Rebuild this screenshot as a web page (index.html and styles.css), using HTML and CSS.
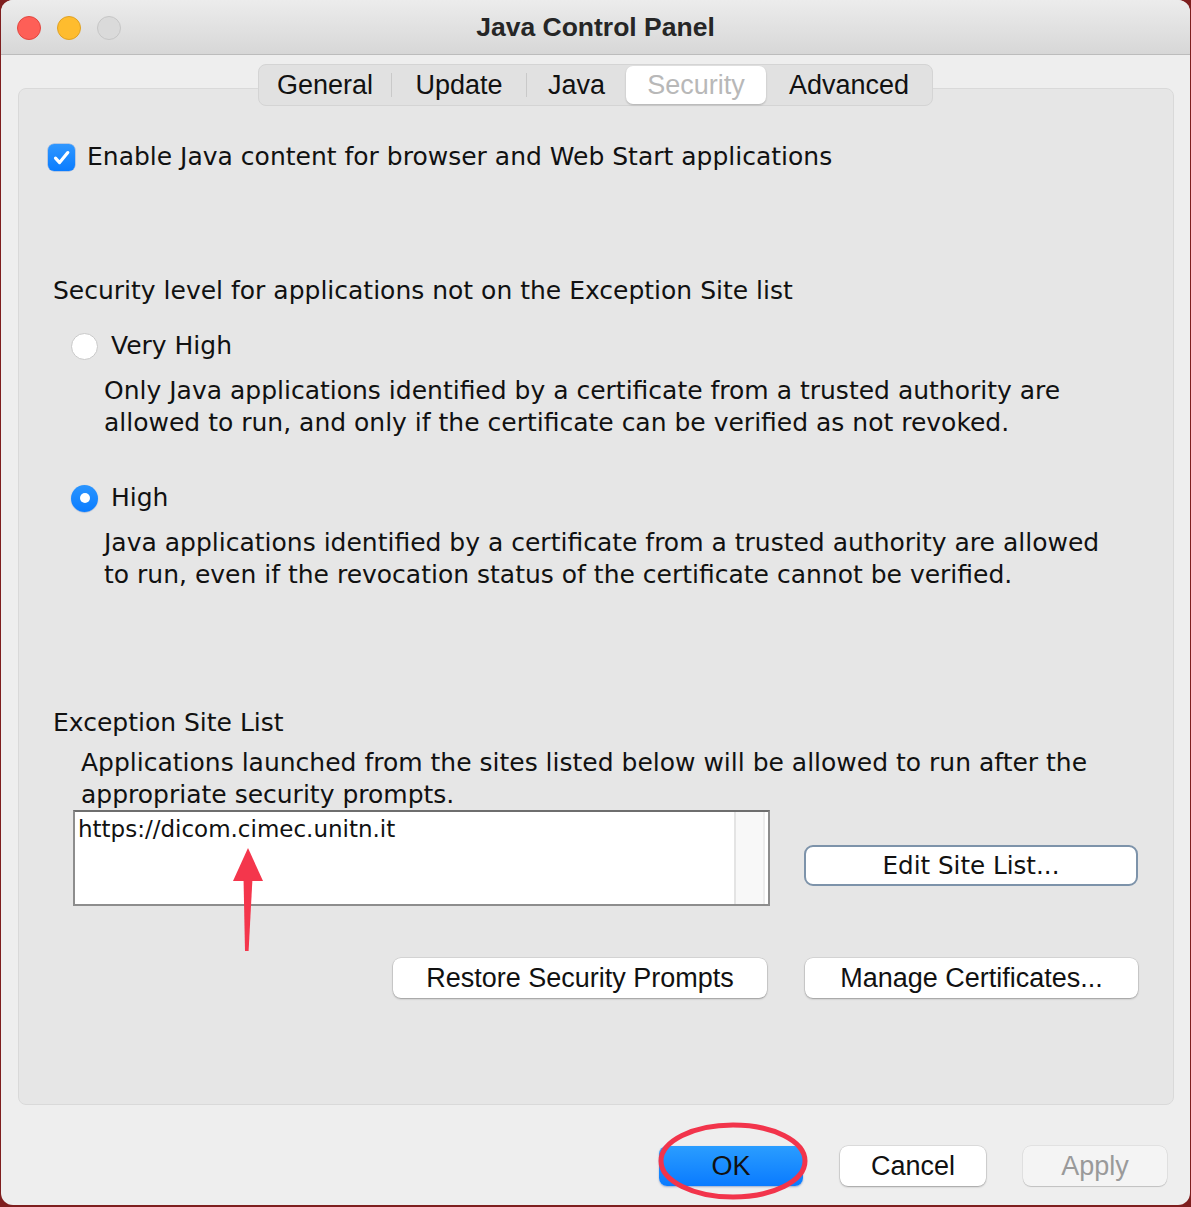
FILE: index.html
```html
<!DOCTYPE html>
<html>
<head>
<meta charset="utf-8">
<link rel="stylesheet" href="styles.css">
</head>
<body>
<div class="window">
  <div class="titlebar">
    <div class="lights">
      <span class="light l-red"></span>
      <span class="light l-yellow"></span>
      <span class="light l-gray"></span>
    </div>
    <div class="title">Java Control Panel</div>
    <div></div>
  </div>
  <div class="content">
    <div class="tabs">
      <div class="tab t-general">General</div>
      <span class="tab-sep"></span>
      <div class="tab t-update">Update</div>
      <span class="tab-sep"></span>
      <div class="tab t-java">Java</div>
      <div class="tab t-security sel">Security</div>
      <div class="tab t-advanced">Advanced</div>
    </div>
    <div class="panel">
      <div class="check-row">
        <span class="checkbox">
          <svg width="27" height="27" viewBox="0 0 27 27"><path d="M7.5 14.2 L11.6 18.6 L19.8 8.6" fill="none" stroke="#fff" stroke-width="3.2" stroke-linecap="round" stroke-linejoin="round"/></svg>
        </span>
        <span>Enable Java content for browser and Web Start applications</span>
      </div>
      <div class="level-title">Security level for applications not on the Exception Site list</div>
      <div class="radio-row">
        <span class="radio"></span>
        <span>Very High</span>
      </div>
      <div class="desc">Only Java applications identified by a certificate from a trusted authority are<br>allowed to run, and only if the certificate can be verified as not revoked.</div>
      <div class="radio-row high">
        <span class="radio on"><span class="dot"></span></span>
        <span>High</span>
      </div>
      <div class="desc">Java applications identified by a certificate from a trusted authority are allowed<br>to run, even if the revocation status of the certificate cannot be verified.</div>
      <div class="exc-title">Exception Site List</div>
      <div class="exc-desc">Applications launched from the sites listed below will be allowed to run after the<br>appropriate security prompts.</div>
      <div class="list-row">
        <div class="sitelist">
          <div class="sitelist-items">https://dicom.cimec.unitn.it</div>
          <div class="sitelist-scroll"></div>
        </div>
        <button class="btn-edit">Edit Site List...</button>
      </div>
      <div class="btn-row2">
        <button class="btn btn-restore">Restore Security Prompts</button>
        <button class="btn btn-manage">Manage Certificates...</button>
      </div>
    </div>
    <div class="footer">
      <button class="btn btn-ok">OK</button>
      <button class="btn btn-cancel">Cancel</button>
      <button class="btn btn-apply">Apply</button>
    </div>
  </div>
</div>
<svg class="annot" width="1191" height="1207" viewBox="0 0 1191 1207">
  <ellipse cx="733" cy="1161" rx="72" ry="36" fill="none" stroke="#f2344b" stroke-width="5"/>
  <polygon points="248,848 233,881 263,881" fill="#f4364c"/>
  <polygon points="243.5,878 252.5,878 248.6,951 245,951" fill="#f4364c"/>
</svg>
</body>
</html>
```
FILE: styles.css
```css
html, body {
  margin: 0;
  padding: 0;
}
body {
  background: #7e1e1e;
  width: 1191px;
  height: 1207px;
  position: relative;
  overflow: hidden;
  font-family: "DejaVu Sans", sans-serif;
  color: #111;
}
.window {
  margin-left: 1px;
  width: 1189px;
  height: 1205px;
  background: #eeeeee;
  border-radius: 12px;
  overflow: hidden;
  display: flex;
  flex-direction: column;
}
.titlebar {
  height: 54px;
  border-bottom: 1px solid #bcbcbc;
  background: linear-gradient(#ececec, #d7d7d7);
  display: grid;
  grid-template-columns: 1fr auto 1fr;
  align-items: center;
}
.lights {
  display: flex;
  gap: 16px;
  padding-left: 16px;
  padding-top: 2px;
}
.light {
  width: 24px;
  height: 24px;
  border-radius: 50%;
  box-sizing: border-box;
}
.l-red { background: #fe5f57; border: 1px solid #e2463f; }
.l-yellow { background: #febc2e; border: 1px solid #e0a123; }
.l-gray { background: #dadada; border: 1px solid #c6c6c6; }
.title {
  font-family: "Liberation Sans", Arial, sans-serif;
  font-weight: bold;
  font-size: 26.5px;
  color: #262626;
}
.content {
  display: flex;
  flex-direction: column;
  padding-top: 9px;
}
.tabs {
  position: relative;
  z-index: 1;
  align-self: center;
  display: flex;
  align-items: stretch;
  width: 675px;
  height: 42px;
  box-sizing: border-box;
  border: 1px solid #d4d4d4;
  border-radius: 8px;
  background: #e1e1e1;
}
.tab {
  display: flex;
  align-items: center;
  justify-content: center;
  font-family: "Liberation Sans", Arial, sans-serif;
  font-size: 27px;
  color: #111;
}
.t-general { width: 132px; }
.t-update { width: 134px; }
.t-java { width: 99px; }
.t-security { width: 140px; }
.t-advanced { width: 166px; }
.tab-sep {
  width: 1px;
  height: 24px;
  align-self: center;
  background: #c9c9c9;
}
.tab.sel {
  background: #ffffff;
  color: #b8b8b8;
  border-radius: 7px;
  margin: 1px 0;
  box-shadow: 0 1px 2px rgba(0, 0, 0, 0.22);
}
.panel {
  margin: -18px 0 0 17px;
  width: 1156px;
  height: 1017px;
  box-sizing: border-box;
  border: 1px solid #d9d9d9;
  border-radius: 8px;
  background: #e6e6e6;
  padding-top: 52px;
  font-size: 25px;
  line-height: 32px;
}
.check-row {
  display: flex;
  align-items: center;
  height: 32px;
  margin-left: 29px;
  gap: 12px;
}
.checkbox {
  width: 27px;
  height: 27px;
  border-radius: 6px;
  background: linear-gradient(#2f97ff, #0a7cff);
  display: flex;
  box-shadow: 0 0 0 0.5px rgba(0, 80, 200, 0.4);
}
.level-title {
  margin: 102px 0 0 34px;
}
.radio-row {
  display: flex;
  align-items: center;
  height: 32px;
  margin: 23px 0 0 52px;
  gap: 13px;
}
.radio-row.high {
  margin-top: 43px;
}
.radio {
  width: 27px;
  height: 27px;
  box-sizing: border-box;
  border-radius: 50%;
  background: #ffffff;
  border: 1px solid #c9c9c9;
  display: flex;
  align-items: center;
  justify-content: center;
}
.radio.on {
  background: linear-gradient(#2a95ff, #0a7cff);
  border: none;
  box-shadow: 0 0.5px 1px rgba(0, 60, 160, 0.4);
}
.radio .dot {
  width: 10px;
  height: 10px;
  border-radius: 50%;
  background: #ffffff;
}
.desc {
  margin: 13px 0 0 85px;
}
.exc-title {
  margin: 116px 0 0 34px;
}
.exc-desc {
  margin: 8px 0 0 62px;
}
.list-row {
  display: flex;
  align-items: flex-start;
  margin-top: -1px;
}
.sitelist {
  margin-left: 54px;
  width: 697px;
  height: 96px;
  box-sizing: border-box;
  border: 2px solid #8d8d8d;
  border-top-color: #6e6e6e;
  background: #ffffff;
  display: flex;
}
.sitelist-items {
  flex: 1;
  font-size: 23px;
  line-height: 30px;
  padding: 2px 0 0 3px;
  color: #111;
}
.sitelist-scroll {
  width: 27px;
  margin-right: 3px;
  background: #f8f8f8;
  border-left: 2px solid #e4e4e4;
  border-right: 2px solid #ececec;
}
.btn-edit {
  margin: 35px 0 0 34px;
  width: 334px;
  height: 41px;
  box-sizing: border-box;
  border: 2px solid #7d93aa;
  border-radius: 9px;
  background: #ffffff;
  font-family: "DejaVu Sans", sans-serif;
  font-size: 24.6px;
  color: #111;
  padding: 0;
}
.btn {
  height: 40px;
  box-sizing: border-box;
  border: none;
  border-radius: 8px;
  background: #ffffff;
  box-shadow: 0 0 0 0.5px rgba(0, 0, 0, 0.14), 0 1px 2px rgba(0, 0, 0, 0.28);
  font-family: "Liberation Sans", Arial, sans-serif;
  font-size: 27px;
  color: #111;
  padding: 0;
}
.btn-row2 {
  display: flex;
  margin-top: 52px;
}
.btn-restore {
  margin-left: 374px;
  width: 374px;
}
.btn-manage {
  margin-left: 38px;
  width: 333px;
}
.footer {
  display: flex;
  justify-content: flex-end;
  gap: 37px;
  margin-top: 41px;
  padding-right: 23px;
}
.btn-ok {
  width: 144px;
  background: linear-gradient(#2a9dff, #0a7bff);
  box-shadow: 0 1px 2px rgba(0, 50, 140, 0.35);
}
.btn-cancel {
  width: 146px;
}
.btn-apply {
  width: 144px;
  background: #f4f4f4;
  color: #9a9a9a;
  box-shadow: 0 0 0 0.5px rgba(0, 0, 0, 0.1), 0 1px 1px rgba(0, 0, 0, 0.15);
}
.annot {
  position: absolute;
  left: 0;
  top: 0;
  pointer-events: none;
}
```
